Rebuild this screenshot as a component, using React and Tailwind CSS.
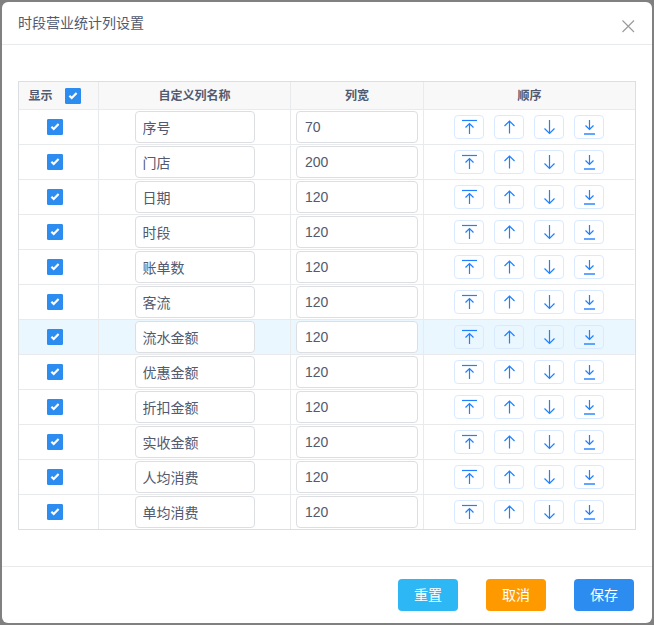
import { useState } from "react";

const initialColumns = [
  { id: 1, name: "序号", width: "70" },
  { id: 2, name: "门店", width: "200" },
  { id: 3, name: "日期", width: "120" },
  { id: 4, name: "时段", width: "120" },
  { id: 5, name: "账单数", width: "120" },
  { id: 6, name: "客流", width: "120" },
  { id: 7, name: "流水金额", width: "120" },
  { id: 8, name: "优惠金额", width: "120" },
  { id: 9, name: "折扣金额", width: "120" },
  { id: 10, name: "实收金额", width: "120" },
  { id: 11, name: "人均消费", width: "120" },
  { id: 12, name: "单均消费", width: "120" },
].map((col) => ({ ...col, visible: true }));

const moves = [
  {
    key: "top",
    label: "置顶",
    icon: (
      <>
        <path d="M1 1.5H16" />
        <path d="M8.5 15V4.5M4.5 8.5L8.5 4.5L12.5 8.5" />
      </>
    ),
  },
  { key: "up", label: "上移", icon: <path d="M8.5 14.5V1.5M3.5 7L8.5 2L13.5 7" /> },
  { key: "down", label: "下移", icon: <path d="M8.5 1V14.5M3.5 9.5L8.5 14.5L13.5 9.5" /> },
  {
    key: "bottom",
    label: "置底",
    icon: (
      <>
        <path d="M8.5 1V10.5M4.5 6.5L8.5 10.5L12.5 6.5" />
        <path d="M3 15H14" strokeWidth="2" opacity="0.7" />
      </>
    ),
  },
];

function Checkbox({ label, checked, onChange }) {
  return (
    <span className="grid size-4">
      <input
        type="checkbox"
        aria-label={label}
        checked={checked}
        onChange={onChange}
        className="peer [grid-area:1/1] size-4 appearance-none rounded-[1px] border border-[#dcdee2] bg-white checked:border-[#2d8cf0] checked:bg-[#2d8cf0]"
      />
      <svg
        viewBox="0 0 16 16"
        className="[grid-area:1/1] size-4 pointer-events-none opacity-0 peer-checked:opacity-100"
        fill="none"
        stroke="white"
        strokeWidth="2.2"
      >
        <path d="M4.4 7.8L6.7 10L11.6 5" />
      </svg>
    </span>
  );
}

export default function App() {
  const [columns, setColumns] = useState(initialColumns);
  const [hoverId, setHoverId] = useState(7);

  const allVisible = columns.every((col) => col.visible);

  const update = (id, patch) =>
    setColumns(columns.map((col) => (col.id === id ? { ...col, ...patch } : col)));

  const move = (index, type) => {
    const targets = { top: 0, up: index - 1, down: index + 1, bottom: columns.length - 1 };
    const next = [...columns];
    const [item] = next.splice(index, 1);
    next.splice(Math.max(0, targets[type]), 0, item);
    setColumns(next);
  };

  const th = "h-7 border-b border-r border-[#e8eaec] p-0 text-center text-xs font-bold last:border-r-0";
  const td = "border-b border-r border-[#e8eaec] py-px group-last:border-b-0 last:border-r-transparent";
  const field = "block h-8 rounded border border-[#dcdee2] bg-white text-sm outline-none focus:border-[#57a3f3]";

  return (
    <div className="min-h-screen bg-[#808080] p-[2px] font-['Liberation_Sans','Noto_Sans_CJK_SC',sans-serif] text-[#515a6e]">
      <div role="dialog" aria-labelledby="dialog-title" className="rounded-md bg-white">
        {/* Header */}
        <header className="flex h-[43px] items-center justify-between border-b border-[#e8eaec] px-4">
          <h1 id="dialog-title" className="text-sm">时段营业统计列设置</h1>
          <button type="button" aria-label="关闭" className="mt-[6px]">
            <svg viewBox="0 0 16 16" className="size-4" fill="none" stroke="#999" strokeWidth="1.1">
              <path d="M2.5 2.5L14 14M14 2.5L2.5 14" />
            </svg>
          </button>
        </header>

        {/* Column table */}
        <main className="px-4 py-9">
          <div className="border border-[#dcdee2]">
            <table className="w-full table-fixed border-separate border-spacing-0">
              <colgroup>
                <col className="w-[80px]" />
                <col className="w-[192px]" />
                <col className="w-[133px]" />
                <col />
              </colgroup>
              <thead className="bg-[#f8f8f9]">
                <tr>
                  <th className={th}>
                    <div className="flex items-center justify-center gap-3 pr-2">
                      显示
                      <Checkbox
                        label="全选"
                        checked={allVisible}
                        onChange={() => setColumns(columns.map((col) => ({ ...col, visible: !allVisible })))}
                      />
                    </div>
                  </th>
                  <th className={th}>自定义列名称</th>
                  <th className={th}>列宽</th>
                  <th className={th}>顺序</th>
                </tr>
              </thead>
              <tbody>
                {columns.map((col, index) => (
                  <tr
                    key={col.id}
                    onMouseEnter={() => setHoverId(col.id)}
                    className={`group ${hoverId === col.id ? "bg-[#ebf7ff]" : "bg-white"}`}
                  >
                    <td className={td}>
                      <div className="flex justify-center pr-2">
                        <Checkbox
                          label={col.name}
                          checked={col.visible}
                          onChange={() => update(col.id, { visible: !col.visible })}
                        />
                      </div>
                    </td>
                    <td className={td}>
                      <input
                        type="text"
                        aria-label="自定义列名称"
                        value={col.name}
                        onChange={(e) => update(col.id, { name: e.target.value })}
                        className={`${field} mx-auto w-[120px] px-[7px]`}
                      />
                    </td>
                    <td className={`${td} px-[5px]`}>
                      <input
                        type="text"
                        aria-label="列宽"
                        value={col.width}
                        onChange={(e) => update(col.id, { width: e.target.value })}
                        className={`${field} w-full px-2`}
                      />
                    </td>
                    <td className={td}>
                      <div className="flex justify-center gap-[10px]">
                        {moves.map((item) => (
                          <button
                            key={item.key}
                            type="button"
                            aria-label={item.label}
                            onClick={() => move(index, item.key)}
                            className="flex h-6 w-[30px] items-center justify-center rounded border border-[#d9eaff]"
                          >
                            <svg viewBox="0 0 16 16" className="size-4" fill="none" stroke="#2080ff" strokeWidth="1.2">
                              {item.icon}
                            </svg>
                          </button>
                        ))}
                      </div>
                    </td>
                  </tr>
                ))}
              </tbody>
            </table>
          </div>
        </main>

        {/* Actions */}
        <footer className="flex justify-end gap-7 border-t border-[#e8eaec] px-[18px] py-3 text-sm text-white">
          <button
            type="button"
            onClick={() => setColumns(initialColumns)}
            className="h-8 w-[60px] rounded bg-[#2db7f5]"
          >
            重置
          </button>
          <button type="button" className="h-8 w-[60px] rounded bg-[#ff9900]">取消</button>
          <button type="button" className="h-8 w-[60px] rounded bg-[#2d8cf0]">保存</button>
        </footer>
      </div>
    </div>
  );
}
